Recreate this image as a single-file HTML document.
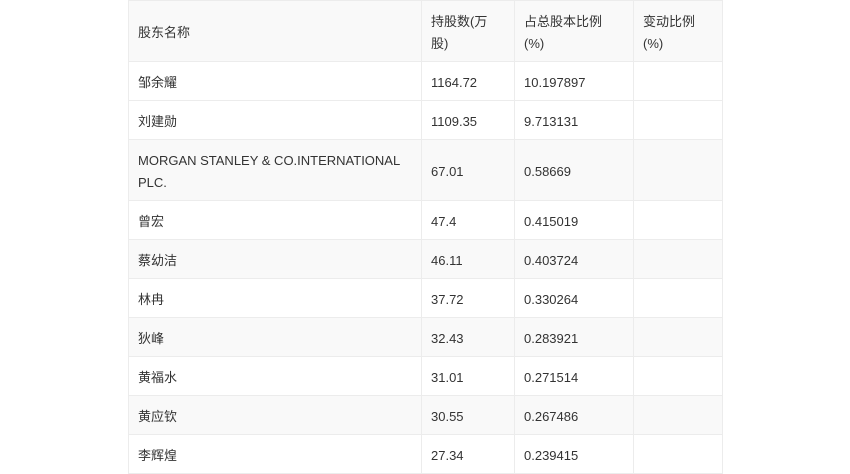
<!DOCTYPE html>
<html><head><meta charset="utf-8"><style>
html,body{margin:0;padding:0;background:#fff;width:850px;height:474px;overflow:hidden}
table{position:absolute;left:128px;top:0;border-collapse:collapse;font-family:"Liberation Sans","Noto Sans CJK SC",sans-serif;font-size:13px;color:#333}
td{border:1px solid #ececec;padding:3px 9px 0 9px;vertical-align:middle;line-height:22px;box-sizing:border-box}
tr.g td{background:#f9f9f9}
</style></head><body>
<table>
<colgroup><col style="width:293px"><col style="width:93px"><col style="width:119px"><col style="width:89px"></colgroup>
<tr class="g" style="height:61px"><td>股东名称</td><td>持股数(万<br>股)</td><td>占总股本比例<br>(%)</td><td>变动比例<br>(%)</td></tr>
<tr style="height:39px"><td>邹余耀</td><td>1164.72</td><td>10.197897</td><td></td></tr>
<tr style="height:39px"><td>刘建勋</td><td>1109.35</td><td>9.713131</td><td></td></tr>
<tr class="g" style="height:61px"><td>MORGAN STANLEY &amp; CO.INTERNATIONAL<br>PLC.</td><td>67.01</td><td>0.58669</td><td></td></tr>
<tr style="height:39px"><td>曾宏</td><td>47.4</td><td>0.415019</td><td></td></tr>
<tr class="g" style="height:39px"><td>蔡幼洁</td><td>46.11</td><td>0.403724</td><td></td></tr>
<tr style="height:39px"><td>林冉</td><td>37.72</td><td>0.330264</td><td></td></tr>
<tr class="g" style="height:39px"><td>狄峰</td><td>32.43</td><td>0.283921</td><td></td></tr>
<tr style="height:39px"><td>黄福水</td><td>31.01</td><td>0.271514</td><td></td></tr>
<tr class="g" style="height:39px"><td>黄应钦</td><td>30.55</td><td>0.267486</td><td></td></tr>
<tr style="height:39px"><td>李辉煌</td><td>27.34</td><td>0.239415</td><td></td></tr>
</table>
</body></html>
